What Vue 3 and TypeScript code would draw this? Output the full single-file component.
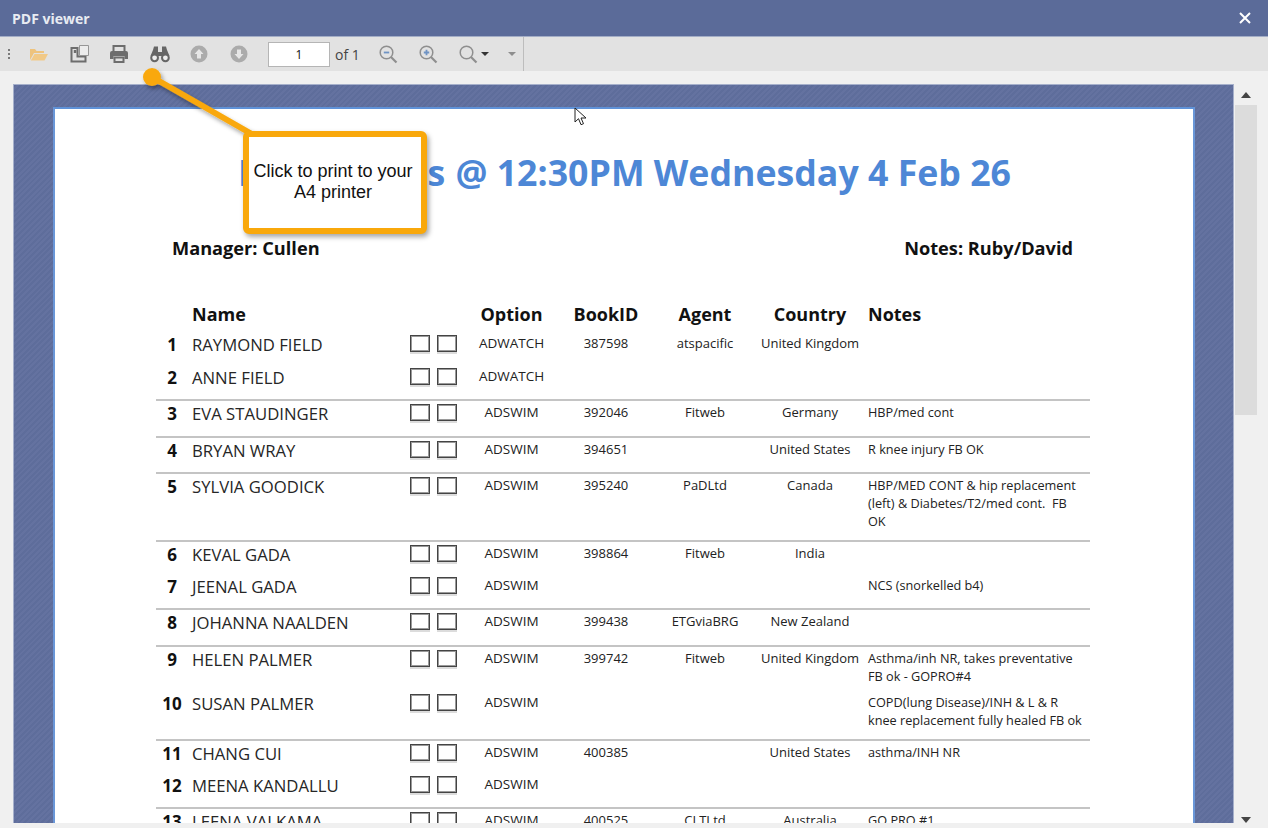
<template>
  <div class="window">
    <header class="titlebar">
      <span class="title">PDF viewer</span>
      <svg class="close" width="12" height="12" viewBox="0 0 12 12"><path d="M1 1l10 10M11 1L1 11" stroke="#fff" stroke-width="2"/></svg>
    </header>

    <div class="toolbar">
      <div class="tools">
        <span class="grip"><i></i><i></i><i></i></span>

        <svg class="tool t-open" width="20" height="16" viewBox="0 0 20 16">
          <path d="M1 14V3h5l1.500 2H15v2H5L1 14z" fill="#eec37d"/>
          <path d="M5.500 8H19l-3.500 6.500H1.800z" fill="#f1c987"/>
        </svg>

        <svg class="tool t-pages" width="20" height="20" viewBox="0 0 20 20">
          <path d="M1.500 4h6v8.500h8v5h-14z" fill="none" stroke="#6d6d6d" stroke-width="2"/>
          <path d="M3.800 6h2.500v3H3.800z" fill="#6d6d6d"/>
          <path d="M9.500 1.500h9v10h-9z" fill="#ececec" stroke="#969696"/>
        </svg>

        <svg class="tool t-print" width="20" height="20" viewBox="0 0 20 20">
          <path d="M4.500 7V2h11v5" fill="none" stroke="#6d6d6d" stroke-width="2"/>
          <path d="M3 7h14a2 2 0 0 1 2 2v6h-3.500v-3h-11v3H1V9a2 2 0 0 1 2-2z" fill="#6d6d6d"/>
          <path d="M5.500 13.500h9V18h-9z" fill="none" stroke="#6d6d6d" stroke-width="2"/>
        </svg>

        <svg class="tool t-find" width="20" height="18" viewBox="0 0 20 18">
          <path d="M3 5l1-3.500h4V7h4V1.500h4L17 5l2.500 6H.5z" fill="#666"/>
          <circle cx="4.600" cy="12.800" r="3.400" fill="#eee" stroke="#666" stroke-width="2"/>
          <circle cx="15.400" cy="12.800" r="3.400" fill="#eee" stroke="#666" stroke-width="2"/>
        </svg>

        <svg class="tool t-up" width="18" height="18" viewBox="0 0 18 18">
          <circle cx="9" cy="9" r="8.500" fill="#ababab"/>
          <path d="M9 4l4.500 5H11v4.500H7V9H4.500z" fill="#e6e6e6"/>
        </svg>

        <svg class="tool t-down" width="18" height="18" viewBox="0 0 18 18">
          <circle cx="9" cy="9" r="8.500" fill="#ababab"/>
          <path d="M9 14l4.500-5H11V4.500H7V9H4.500z" fill="#e6e6e6"/>
        </svg>

        <div class="page-input">1</div>
        <span class="page-of">of 1</span>

        <svg class="tool t-zoomout" width="19" height="19" viewBox="0 0 19 19">
          <circle cx="7.500" cy="7.500" r="6.300" fill="none" stroke="#8f8f8f" stroke-width="1.500"/>
          <path d="M12 12l5.500 5.500" stroke="#8f8f8f" stroke-width="2.200"/>
          <path d="M4.800 7.500h5.400" stroke="#6f93c4" stroke-width="1.800"/>
        </svg>

        <svg class="tool t-zoomin" width="19" height="19" viewBox="0 0 19 19">
          <circle cx="7.500" cy="7.500" r="6.300" fill="none" stroke="#8f8f8f" stroke-width="1.500"/>
          <path d="M12 12l5.500 5.500" stroke="#8f8f8f" stroke-width="2.200"/>
          <path d="M4.800 7.500h5.400M7.500 4.800v5.400" stroke="#6f93c4" stroke-width="1.800"/>
        </svg>

        <svg class="tool t-zoom" width="19" height="19" viewBox="0 0 19 19">
          <circle cx="7.500" cy="7.500" r="6.300" fill="none" stroke="#8f8f8f" stroke-width="1.500"/>
          <path d="M12 12l5.500 5.500" stroke="#8f8f8f" stroke-width="2.200"/>
        </svg>
        <span class="caret dark"></span>
        <span class="caret light"></span>
      </div>
    </div>

    <div class="viewer">
      <div class="canvas">
        <div class="page">
          <h1 class="doc-title"><span class="doc-lead">Passengers</span> @ 12:30PM Wednesday 4 Feb 26</h1>
          <div class="staff">
            <span>Manager: Cullen</span>
            <span>Notes: Ruby/David</span>
          </div>

          <div class="table">
            <div class="row head">
              <span></span>
              <span class="name">Name</span>
              <span></span>
              <span class="mid">Option</span>
              <span class="mid">BookID</span>
              <span class="mid">Agent</span>
              <span class="mid">Country</span>
              <span class="notes">Notes</span>
            </div>

            <div v-for="(group, g) in groups" :key="g" class="group">
              <div v-for="p in group" :key="p.n" class="row" :style="{ height: p.h + 'px' }">
                <span class="num">{{ p.n }}</span>
                <span class="name">{{ p.name }}</span>
                <span class="boxes"><i></i><i></i></span>
                <span class="cell mid option">{{ p.option }}</span>
                <span class="cell mid">{{ p.book }}</span>
                <span class="cell mid">{{ p.agent }}</span>
                <span class="cell mid">{{ p.country }}</span>
                <span class="cell notes">{{ p.notes }}</span>
              </div>
            </div>
          </div>
        </div>
      </div>

      <div class="scrollbar">
        <span class="arrow up"></span>
        <div class="track"><div class="thumb"></div></div>
        <span class="arrow down"></span>
      </div>
    </div>

    <svg class="pointer" width="120" height="80" viewBox="0 0 120 80">
      <defs>
        <filter id="soft" x="-20%" y="-20%" width="150%" height="150%">
          <feDropShadow dx="2" dy="3" stdDeviation="2" flood-color="#000" flood-opacity="0.35"/>
        </filter>
      </defs>
      <g filter="url(#soft)">
        <circle cx="11" cy="10" r="9" fill="#f9a80b"/>
        <path d="M11 10L116 70" stroke="#f9a80b" stroke-width="6"/>
      </g>
    </svg>
    <div class="callout">Click to print to your A4 printer</div>

    <svg class="cursor" width="13" height="20" viewBox="0 0 13 20">
      <path d="M1 1v14l3.500-3.300 2.500 6 2.500-1-2.500-5.700h5z" fill="#fff" stroke="#222" stroke-width="1"/>
    </svg>
  </div>
</template>

<script setup lang="ts">
interface Passenger {
  n: number
  name: string
  option: string
  book: string
  agent: string
  country: string
  notes: string
  h: number
}

function p(n: number, name: string, option: string, book: string, agent: string, country: string, notes: string, h: number): Passenger {
  return { n, name, option, book, agent, country, notes, h }
}

const groups: Passenger[][] = [
  [
    p(1, 'RAYMOND FIELD', 'ADWATCH', '387598', 'atspacific', 'United Kingdom', '', 33),
    p(2, 'ANNE FIELD', 'ADWATCH', '', '', '', '', 34),
  ],
  [p(3, 'EVA STAUDINGER', 'ADSWIM', '392046', 'Fitweb', 'Germany', 'HBP/med cont', 35)],
  [p(4, 'BRYAN WRAY', 'ADSWIM', '394651', '', 'United States', 'R knee injury FB OK', 34)],
  [p(5, 'SYLVIA GOODICK', 'ADSWIM', '395240', 'PaDLtd', 'Canada', 'HBP/MED CONT & hip replacement (left) & Diabetes/T2/med cont.  FB OK', 66)],
  [
    p(6, 'KEVAL GADA', 'ADSWIM', '398864', 'Fitweb', 'India', '', 32),
    p(7, 'JEENAL GADA', 'ADSWIM', '', '', '', 'NCS (snorkelled b4)', 34),
  ],
  [p(8, 'JOHANNA NAALDEN', 'ADSWIM', '399438', 'ETGviaBRG', 'New Zealand', '', 35)],
  [
    p(9, 'HELEN PALMER', 'ADSWIM', '399742', 'Fitweb', 'United Kingdom', 'Asthma/inh NR, takes preventative FB ok - GOPRO#4', 44),
    p(10, 'SUSAN PALMER', 'ADSWIM', '', '', '', 'COPD(lung Disease)/INH & L & R knee replacement fully healed FB ok', 48),
  ],
  [
    p(11, 'CHANG CUI', 'ADSWIM', '400385', '', 'United States', 'asthma/INH NR', 32),
    p(12, 'MEENA KANDALLU', 'ADSWIM', '', '', '', '', 34),
  ],
  [p(13, 'LEENA VALKAMA', 'ADSWIM', '400525', 'CLTLtd', 'Australia', 'GO PRO #1', 36)],
]
</script>

<style>
html,
body {
  margin: 0;
  overflow: hidden;
}
</style>

<style scoped>
.window {
  position: relative;
  width: 1268px;
  height: 828px;
  display: flex;
  flex-direction: column;
  overflow: hidden;
  background: #f0f0f0;
  font-family: "Open Sans", "Noto Sans", sans-serif;
  color: #111;
}

.titlebar {
  flex: none;
  height: 36px;
  padding: 0 17px 0 12px;
  display: flex;
  align-items: center;
  justify-content: space-between;
  background: #5b6b99;
  border-bottom: 1px solid #a3adc6;
  box-sizing: content-box;
}

.title {
  font-size: 14px;
  font-weight: 700;
  color: #e8ebf2;
}

.toolbar {
  flex: none;
  height: 34px;
  background: #e2e2e2;
}

.tools {
  width: 523px;
  height: 34px;
  display: flex;
  align-items: center;
  border-right: 1px solid #bdbdbd;
  position: relative;
}

.grip {
  margin-left: 8px;
  display: flex;
  flex-direction: column;
  gap: 2px;
}

.grip i {
  width: 2px;
  height: 2px;
  background: #7a7a7a;
}

.t-open { margin-left: 19px; }
.t-pages { margin-left: 21px; }
.t-print { margin-left: 19px; }
.t-find { margin-left: 21px; }
.t-up { margin-left: 20px; }
.t-down { margin-left: 22px; }

.page-input {
  width: 60px;
  height: 23px;
  margin-left: 20px;
  border: 1px solid #b5b5b5;
  background: #fff;
  font-size: 12px;
  line-height: 23px;
  text-align: center;
}

.page-of {
  margin-left: 5px;
  font-size: 14px;
  color: #444;
}

.t-zoomout { margin-left: 19px; }
.t-zoomin { margin-left: 21px; }
.t-zoom { margin-left: 21px; }

.caret {
  width: 0;
  height: 0;
  border-left: 4px solid transparent;
  border-right: 4px solid transparent;
}

.caret.dark {
  margin-left: 3px;
  border-top: 4px solid #333;
}

.caret.light {
  margin-left: 19px;
  border-top: 4px solid #8e8e8e;
}

.viewer {
  flex: 1;
  display: flex;
  padding: 13px 0 5px 13px;
  min-height: 0;
}

.canvas {
  width: 1221px;
  padding: 22px 38px 0 39px;
  box-sizing: border-box;
  overflow: hidden;
  background: repeating-linear-gradient(135deg, #5e6d9b 0 2px, #6472a0 2px 4px);
  border: 1px solid #a6b0cb;
  border-bottom: none;
}

.page {
  height: 800px;
  background: #fff;
  border-top: 2px solid #5f92d8;
  border-left: 2px solid #6a97d8;
  border-right: 2px solid #6a97d8;
  padding: 0 103px 0 101px;
}

.doc-title {
  margin: 40px -103px 0 -100px;
  font-size: 35.700px;
  line-height: 46px;
  font-weight: 700;
  text-align: center;
  white-space: nowrap;
  color: #4d87d6;
}

.doc-lead {
  letter-spacing: 0.9px;
}

.staff {
  margin: 40px 17px 0 16px;
  display: flex;
  justify-content: space-between;
  font-size: 18.200px;
  line-height: 26px;
  font-weight: 700;
  color: #111;
}

.table {
  margin-top: 40px;
}

.group {
  border-bottom: 2px solid #c4c4c4;
}

.group:last-child {
  border-bottom: none;
}

.row {
  display: grid;
  grid-template-columns: 32px 217px 60px 93px 96px 102px 108px 226px;
  align-items: start;
  box-sizing: border-box;
  padding-top: 1px;
}

.row.head {
  height: 31px;
  font-size: 18px;
  font-weight: 700;
  line-height: 24px;
  color: #111;
}

.row.head .name {
  font-size: 18px;
  color: #111;
}

.num {
  font-size: 17px;
  line-height: 24px;
  font-weight: 700;
  text-align: center;
}

.name {
  padding-left: 4px;
  font-size: 16.700px;
  line-height: 24px;
  color: #262626;
}

.boxes {
  display: flex;
  gap: 7px;
  padding: 2px 0 0 5px;
}

.boxes i {
  width: 18px;
  height: 15px;
  border: 1px solid #444;
  box-shadow: inset 0 0 0 1px #9a9a9a, 0 2px 0 #dcdcdc;
}

.cell {
  padding-top: 1px;
  font-size: 13px;
  line-height: 18px;
  color: #222;
  white-space: pre-wrap;
}

.option {
  font-size: 13.500px;
}

.mid {
  text-align: center;
  white-space: nowrap;
}

.notes {
  padding-left: 4px;
}

.cell.notes {
  padding-right: 4px;
  font-size: 12.700px;
}

.scrollbar {
  width: 22px;
  margin-left: 1px;
  display: flex;
  flex-direction: column;
  align-items: center;
}

.arrow {
  flex: none;
  width: 0;
  height: 0;
  border-left: 5px solid transparent;
  border-right: 5px solid transparent;
}

.arrow.up {
  margin-top: 8px;
  border-bottom: 6px solid #444;
}

.arrow.down {
  margin-top: 1px;
  border-top: 6px solid #444;
}

.track {
  flex: 1;
  width: 100%;
  margin-top: 7px;
}

.thumb {
  height: 310px;
  background: #dcdcdc;
}

.pointer {
  position: absolute;
  left: 141px;
  top: 67px;
  overflow: visible;
}

.callout {
  position: absolute;
  left: 243px;
  top: 131px;
  width: 184px;
  height: 103px;
  padding: 0 7px 2px 3px;
  box-sizing: border-box;
  display: flex;
  align-items: center;
  justify-content: center;
  text-align: center;
  background: #fff;
  border: 6px solid #f9a80b;
  border-radius: 6px;
  box-shadow: 2px 3px 5px rgba(0, 0, 0, 0.35);
  font-family: "Liberation Sans", Arial, sans-serif;
  font-size: 18px;
  line-height: 21px;
  color: #111;
}

.cursor {
  position: absolute;
  left: 574px;
  top: 107px;
}
</style>
